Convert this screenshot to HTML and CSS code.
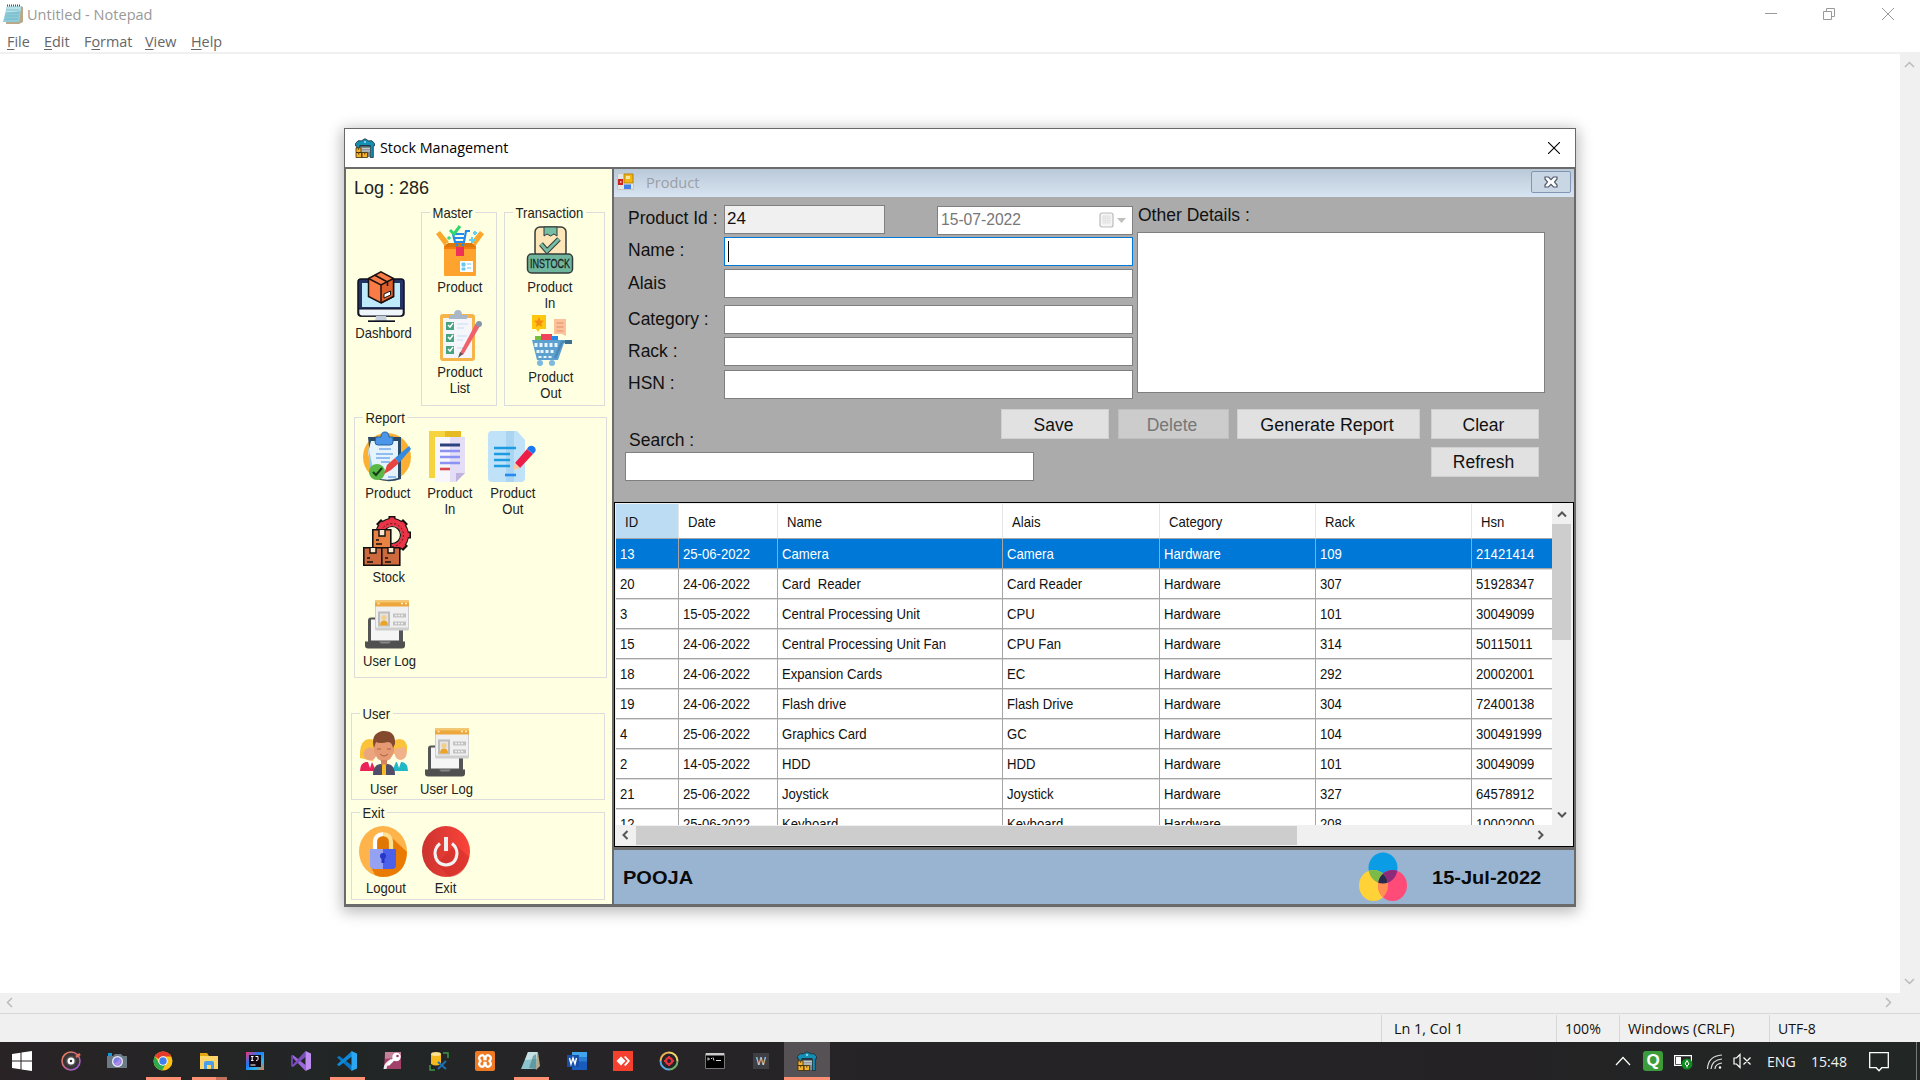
FILE: index.html
```html
<!DOCTYPE html>
<html lang="en">
<head>
<meta charset="utf-8">
<title>Stock Management</title>
<link rel="stylesheet" href="styles.css">
</head>
<body>
<svg class="defs" width="0" height="0">
  <symbol id="notepad" viewBox="0 0 20 20">
    <path d="M4 2h14l2 1v15l-4 2H3z" fill="#b9a98a"/><path d="M4 2h14l-1.500 16H0z" fill="#8fcbd8"/><path d="M4 2h14l-.5 5L3 9z" fill="#b8e2ea"/><path d="M3.500 6h13M3 9h13M2.500 12h13M2 15h13" stroke="#62aebf" stroke-width=".6"/><path d="M4 1.500h14" stroke="#555" stroke-width="2" stroke-dasharray="1 1"/>
  </symbol>
  <symbol id="depot" viewBox="0 0 20 20">
    <path d="M.5 5.500L3 2.800h3.500L10 .7l3.500 2.100H17l2.500 2.700v2.300H18.300V19.500h-3V8H4.700v4H1.700V7.800H.5z" fill="#1590b4" stroke="#1c2a33" stroke-width=".8"/><path d="M4.700 7h10.600v1.600H4.700z" fill="#1c3442"/><path d="M5.500 9h9.500v10H5.500z" fill="#7d878c"/><path d="M6 10.800h9M6 13h9" stroke="#d6dde0" stroke-width="1.100"/><circle cx="10" cy="4" r="1.100" fill="#9adcf0"/>
    <path d="M1 9.800h5v4.700H1zM1 14.500h5.800V19.500H1zM6.800 14.500H12.500V19.500H6.800z" fill="#f4b32c" stroke="#3a2b10" stroke-width=".8"/><path d="M3.500 10v1.800M3.700 14.700v1.800M9.700 14.700v1.800" stroke="#7a4a08" stroke-width="1.200"/>
  </symbol>
  <symbol id="userlog" viewBox="0 0 46 50">
    <path d="M4 43V21q0-3 3-3h30q2 0 2 3v22z" fill="#555"/><path d="M7 20h28v21H7z" fill="#f5f5f5"/><path d="M1 42h40v4q0 3-3 3H4q-3 0-3-3z" fill="#505050"/><path d="M15 42h12l-2 2h-8z" fill="#888"/>
    <rect x="11" y="1" width="34" height="30" rx="1.500" fill="#cfcfcf"/><rect x="12" y="6" width="32" height="22" fill="#f0f0f0"/><path d="M11 1h34v6H11z" fill="#eda73c"/><path d="M11 1h34v2H11z" fill="#f6c86c"/><path d="M13.500 4h2M37 4h2M41 4h2" stroke="#fff0c8" stroke-width="1.500"/>
    <path d="M14 12h12v15H14z" fill="#bdbdbd"/><path d="M16 14h8v12h-8z" fill="#e4e4e4"/><circle cx="20" cy="18" r="2.600" fill="#f3cf8a"/><path d="M16 26q0-5 4-5t4 5z" fill="#eba428"/>
    <path d="M29 14h13v4H29zM29 22h13v4H29z" fill="#c2c2c2"/><path d="M31 16h9M31 24h9" stroke="#eee" stroke-width="1.500" stroke-dasharray="2 1"/>
  </symbol>
</svg>

<header class="np-title">
  <svg width="20" height="20"><use href="#notepad"/></svg>
  <span class="np-name seg">Untitled - Notepad</span>
  <span class="np-controls">
    <svg width="14" height="14" viewBox="0 0 14 14"><path d="M2 6.500h12"/></svg>
    <svg width="14" height="14" viewBox="0 0 14 14"><path d="M1.500 4.500h8v8h-8zM4.500 4V1.500h8v8h-3"/></svg>
    <svg width="14" height="14" viewBox="0 0 14 14"><path d="M1 1l12 12M13 1L1 13"/></svg>
  </span>
</header>
<nav class="np-menu">
  <span class="seg m1"><u>F</u>ile</span><span class="seg m2"><u>E</u>dit</span><span class="seg m3">F<u>o</u>rmat</span><span class="seg m4"><u>V</u>iew</span><span class="seg m5"><u>H</u>elp</span>
</nav>
<main class="np-main">
  <div class="np-page"></div>
  <div class="np-vbar"><svg width="11" height="7" viewBox="0 0 11 7"><path d="M1 6l4.500-4.500L10 6"/></svg><svg width="11" height="7" viewBox="0 0 11 7"><path d="M1 1l4.500 4.500L10 1"/></svg></div>
</main>
<div class="np-hbar"><svg width="7" height="11" viewBox="0 0 7 11"><path d="M6 1L1.500 5.500L6 10"/></svg><svg width="7" height="11" viewBox="0 0 7 11"><path d="M1 1l4.500 4.500L1 10"/></svg></div>
<footer class="np-status"><div class="s1"><span class="seg">Ln 1, Col 1</span></div><div class="s2"><span class="seg">100%</span></div><div class="s3"><span class="seg">Windows (CRLF)</span></div><div class="s4"><span class="seg">UTF-8</span></div></footer>

<section class="taskbar">
  <div class="task start"><svg width="20" height="20" viewBox="0 0 20 20"><path d="M0 3l8.500-1.300v7.800H0zM9.500 1.500L20 0v9.500H9.500zM0 10.500h8.500v7.800L0 17zM9.500 10.500H20V20L9.500 18.500z" fill="#fff"/></svg></div>
  <div class="task"><svg width="20" height="20" viewBox="0 0 20 20"><defs><linearGradient id="rg" x1="0" y1="0" x2="1" y2="1"><stop offset="0" stop-color="#f08a4a"/><stop offset=".5" stop-color="#c8658e"/><stop offset="1" stop-color="#8a5be8"/></linearGradient></defs><circle cx="10" cy="10" r="9" fill="#3a3638" stroke="url(#rg)" stroke-width="1.600"/><circle cx="10" cy="10" r="5" fill="#555"/><circle cx="10" cy="10" r="3.500" fill="#fff"/><circle cx="10" cy="10" r="1.200" fill="#333"/><path d="M15 6l4-3" stroke="#e57455" stroke-width="2.500"/></svg></div>
  <div class="task"><svg width="20" height="20" viewBox="0 0 20 20"><path d="M0 5h6l2-2h6l2 2h4v12H0z" fill="#6c7a83"/><path d="M1 2h4v3H1z" fill="#1997d8"/><circle cx="10.500" cy="10.500" r="5.500" fill="#e9edf5"/><circle cx="10.500" cy="10.500" r="4.200" fill="#7c7fe0"/><path d="M7 12q4 0 6-5q2 5-1.500 7.300Q8 15 7 12z" fill="#b489ea"/></svg></div>
  <div class="task"><svg width="20" height="20" viewBox="0 0 20 20"><circle cx="10" cy="10" r="9.500" fill="#fbc116"/><path d="M10 .5A9.500 9.500 0 0 1 18.300 5.500H10a4.500 4.500 0 0 0-4 2.500L1.800 5.300A9.500 9.500 0 0 1 10 .5z" fill="#e33b2e"/><path d="M1.800 5.300A9.500 9.500 0 0 0 9 19.500l4-7a4.500 4.500 0 0 1-7-.5z" fill="#2da94f"/><circle cx="10" cy="10" r="4.700" fill="#fff"/><circle cx="10" cy="10" r="3.700" fill="#3f7fee"/></svg><i class="run"></i></div>
  <div class="task"><svg width="20" height="20" viewBox="0 0 20 20"><path d="M1 2h7l2 3H1z" fill="#e5a50f"/><path d="M1 5h18v13H1z" fill="#fcd668"/><path d="M5 18v-6q0-2 2-2h6q2 0 2 2v6h-3v-4H8v4z" fill="#4a9fe8"/></svg><i class="run multi"></i></div>
  <div class="task"><svg width="20" height="20" viewBox="0 0 20 20"><defs><linearGradient id="ij" x1="0" y1="0" x2="1" y2="1"><stop offset="0" stop-color="#f4327b"/><stop offset=".4" stop-color="#1c7cf0"/><stop offset=".7" stop-color="#25b5f5"/><stop offset="1" stop-color="#f7772f"/></linearGradient></defs><path d="M1 1h18v18H1z" fill="url(#ij)"/><path d="M4 4h12v12H4z" fill="#130812"/><path d="M6 5.500h2.500M6 9.500h2.500M7.200 5.500v4M10.500 5.500h2.500v3q0 1-2 1M5.500 14h5" stroke="#fff" fill="none"/></svg></div>
  <div class="task"><svg width="20" height="20" viewBox="0 0 20 20"><path d="M0 5l2-1 12.500 10V20L1.500 6.500z" fill="#9a68d8"/><path d="M0 5l2-1v12l-2-1z" fill="#6a43a8"/><path d="M14.500 0v6L2 16l-1.500-1z" fill="#7a4fba"/><path d="M14.500 0L20 2.500v15L14.500 20z" fill="#bf8df2"/></svg></div>
  <div class="task"><svg width="20" height="20" viewBox="0 0 20 20"><path d="M0 6.500l2-1.800 13 9.800V20z" fill="#0b74c4"/><path d="M0 13.500l2 1.800L15 5.500V0z" fill="#0f88d8"/><path d="M14.500 0L20 2.500v15L14.500 20z" fill="#2aa7f0"/></svg><i class="run"></i></div>
  <div class="task"><svg width="20" height="20" viewBox="0 0 20 20"><path d="M2 1h16v17H1z" fill="#a2416a"/><path d="M2 1h16v5L2 8z" fill="#c2809b"/><path d="M2 18q0-5 7-9" stroke="#eee" stroke-width="3" fill="none"/><circle cx="13.500" cy="6" r="4.200" fill="#fff"/><circle cx="14.500" cy="5" r="1.300" fill="#9c3c65"/><path d="M11 8l-6 6" stroke="#fff" stroke-width="2.500"/></svg></div>
  <div class="task"><svg width="20" height="20" viewBox="0 0 20 20"><path d="M2 3v10q5 3 10 0V3z" fill="#f5b91c"/><ellipse cx="7" cy="3" rx="5" ry="2" fill="#fde18b"/><path d="M14 2h5v5M1 14v5h5" stroke="#3c9746" stroke-width="1.500" fill="none"/><path d="M9 11l8 7M17 10l-8 8" stroke="#1d6fae" stroke-width="2"/></svg></div>
  <div class="task"><svg width="20" height="20" viewBox="0 0 20 20"><rect width="20" height="20" rx="2" fill="#ee7b24"/><path d="M6 4.500q3-1 3.500 2.500v1h1V7q.5-3.500 3.500-2.500 3.500 2 .5 5.500 3 3.500-.5 5.500-3 1-3.500-2.500v-1h-1v1q-.5 3.500-3.500 2.500-3.500-2-.5-5.500-3-3.500.5-5.500z" fill="none" stroke="#fff" stroke-width="2.300"/></svg></div>
  <div class="task"><svg width="20" height="20" viewBox="0 0 20 20"><path d="M8 1h9l2 14-4 4z" fill="#b5a684"/><path d="M7 1h9l-1 17H0z" fill="#8cc3cc"/><path d="M7 1h9l-.5 7L4 9z" fill="#c5e1e4"/><path d="M12 5l3-2v15l-7-1z" fill="#3f7e8c" opacity=".6"/></svg><i class="run"></i></div>
  <div class="task"><svg width="20" height="20" viewBox="0 0 20 20"><path d="M5 1h15v18H5z" fill="#1a5cbe"/><path d="M5 1h15v5H5z" fill="#41a5ee"/><path d="M5 6h15v4.500H5z" fill="#2b7cd3"/><path d="M0 4h12v12H0z" fill="#174fa8"/><path d="M2.500 7l1.500 6 2-6 2 6 1.500-6" stroke="#fff" stroke-width="1.400" fill="none"/></svg></div>
  <div class="task"><svg width="20" height="20" viewBox="0 0 20 20"><path d="M0 0h20v20H0z" fill="#f4402f"/><path d="M8 5.500l4.500 4.500L8 14.500 3.500 10z" fill="#fff"/><path d="M11 6l1.500-1L17 10l-4.500 5-1.500-1 3.500-4z" fill="#fff"/></svg></div>
  <div class="task"><svg width="20" height="20" viewBox="0 0 20 20" fill="none" stroke-width="2"><path d="M1.500 10A8.500 8.500 0 0 1 10 1.500" stroke="#eab055"/><path d="M10 1.500A8.500 8.500 0 0 1 18.500 10" stroke="#f3d566"/><path d="M18.500 10A8.500 8.500 0 0 1 10 18.500" stroke="#6eb667"/><path d="M10 18.500A8.500 8.500 0 0 1 1.500 10" stroke="#5ba8e5"/><circle cx="10" cy="10" r="3" stroke="#e9303f" stroke-width="2.200"/><path d="M10 5v1.500M10 13.500V15M5 10h1.500M13.500 10H15" stroke="#e9303f"/></svg></div>
  <div class="task"><svg width="20" height="20" viewBox="0 0 20 20"><path d="M.5 2.500h19v15H.5z" fill="#000" stroke="#777"/><path d="M1 2h18v2.500H1z" fill="#ccc"/><path d="M3 8h2M3 6.500v3M6.500 7v1M8 6.500l1 3M11 9.500h5" stroke="#ddd"/></svg></div>
  <div class="task"><span class="wtile">W</span></div>
  <div class="task active"><svg width="20" height="20"><use href="#depot"/></svg><i class="run full"></i></div>
  <div class="tray">
    <svg class="t1" width="16" height="10" viewBox="0 0 16 10"><path d="M1 9l7-7.500L15 9" fill="none" stroke="#fff" stroke-width="1.200"/></svg>
    <span class="t2">Q</span>
    <svg class="t3" width="20" height="17" viewBox="0 0 20 17"><path d="M.6 2.600h16.800v9.800H.6z" fill="none" stroke="#fff" stroke-width="1.200"/><path d="M2 4h5v7H2z" fill="#fff"/><circle cx="13" cy="11" r="5.500" fill="#108a20"/><path d="M13 7.500l2 3.500-2 2-2-2zM13 13v1.500" fill="none" stroke="#fff"/></svg>
    <svg class="t4" width="17" height="17" viewBox="0 0 17 17" fill="none" stroke="#ddd" stroke-width="1.200"><path d="M1.500 16Q2 3 16 2M5 16Q6 7 16 6M9 16Q9 11 16 10"/><circle cx="14" cy="14.500" r="1.200" fill="#fff" stroke="none"/></svg>
    <svg class="t5" width="19" height="16" viewBox="0 0 19 16" fill="none" stroke="#fff" stroke-width="1.200"><path d="M1 5h2.500L7 1.500v13L3.500 11H1zM10.500 4.500l7 7M17.500 4.500l-7 7"/></svg>
    <span class="seg t6">ENG</span><span class="seg t7">15:48</span>
    <svg class="t8" width="20" height="20" viewBox="0 0 20 20"><path d="M.7.700h18.600v15h-6.500L10 18.800 7.200 15.700H.7z" fill="none" stroke="#fff" stroke-width="1.300"/></svg>
    <i class="peek"></i>
  </div>
</section>

<div class="win">
  <div class="win-title"><svg width="20" height="20"><use href="#depot"/></svg><span class="seg">Stock Management</span><svg class="x" width="12" height="12" viewBox="0 0 12 12"><path d="M0 0l12 12M12 0L0 12"/></svg></div>
  <div class="win-body">
    <aside class="side">
      <div class="log">Log : 286</div>
      <div class="side-top">
        <div class="tool dash"><svg width="48" height="51" viewBox="0 0 48 51">
          <rect x="1" y="8" width="46" height="37" rx="3" fill="#233366" stroke="#0c1020" stroke-width="1.500"/><path d="M5 12h38v24H5z" fill="#bfeafa"/><path d="M1.700 38h44.600v4q0 3-3 3H4.700q-3 0-3-3z" fill="#eef5fb" stroke="#0c1020" stroke-width="1.200"/><path d="M19 45h10l1 5H18z" fill="#c3cfdb"/><path d="M11 50.200h27" stroke="#0c1020" stroke-width="1.700"/>
          <path d="M24 .8L36.500 7.500v18L24 32 11.500 25.500v-18z" fill="#f97b46" stroke="#1a1110" stroke-width="1.500"/><path d="M24 14L36.500 7.500v18L24 32z" fill="#dd5f2b"/><path d="M11.500 7.500L24 14l12.500-6.500M24 14v18M17.500 4l13 7v4M36.500 7.500v18L24 32" fill="none" stroke="#1a1110" stroke-width="1.500"/><path d="M27 23l6.500-3v4L27 27z" fill="#fff" stroke="#1a1110"/></svg><span class="nar">Dashbord</span></div>
        <div class="group master"><div class="legend nar">Master</div>
          <div class="tool"><svg width="48" height="51" viewBox="0 0 48 51"><path d="M8 20L0 9l4-3 9 11zM40 20l8-11-4-3-9 11z" fill="#fba72c"/><path d="M8 19h32v31q0 1-1 1H9q-1 0-1-1z" fill="#ffa32f"/><path d="M8 22l4-4h24l4 4z" fill="#dd7706"/><path d="M8 22h32v2H8z" fill="#f57c0d"/><path d="M20 22h8v9h-8z" fill="#ee3158"/><path d="M24 36h13v11H24z" fill="#fff"/><path d="M26 38h3v3h-3zM26 43h3v2h-3zM31 39h4M31 43h4" fill="#69c7f5" stroke="#69c7f5"/><path d="M34 6h-4l-2 11h-9l-2-8H28M18 13h11" stroke="#218bf0" stroke-width="2.200" fill="none"/><circle cx="21" cy="20" r="1.400" fill="#218bf0"/><circle cx="27" cy="20" r="1.400" fill="#218bf0"/><path d="M14 5l4 4 6-8" stroke="#32d66b" stroke-width="3" fill="none"/><path d="M36 12v6M33 15h6M39 6v4M37 8h4" stroke="#5dd2f5" stroke-width="2"/><circle cx="13" cy="13" r="1.800" fill="#3bd978"/></svg><span class="nar">Product</span></div>
          <div class="tool"><svg width="48" height="51" viewBox="0 0 48 51"><rect x="4" y="4" width="35" height="47" rx="3" fill="#f5b54a"/><path d="M7 8h29v40H7z" fill="#f5f6fb"/><path d="M13 5h5q0-5 4-5t4 5h5v4H13z" fill="#a8b8c8"/><path d="M10 12h8v8h-8zM10 24h8v8h-8zM10 36h8v8h-8z" fill="#47a37f"/><path d="M12 15l2 2 3-4M12 27l2 2 3-4M12 39l2 2 3-4" stroke="#fff" stroke-width="1.500" fill="none"/><path d="M21 14h11M21 18h7M21 26h10M21 30h6M21 38h7" stroke="#d8e3f3" stroke-width="1.500"/><path d="M24 43l16-30 4 3-17 29z" fill="#ef626c"/><path d="M24 42l-2 6 5-4z" fill="#555"/><circle cx="43" cy="14" r="3" fill="#8696a8"/></svg><span class="nar">Product<br>List</span></div>
        </div>
        <div class="group trans"><div class="legend nar">Transaction</div>
          <div class="tool"><svg width="48" height="51" viewBox="0 0 48 51"><rect x="9" y="2" width="31" height="30" rx="5" fill="#fde6b8" stroke="#333c3a" stroke-width="1.500"/><path d="M18 2h13v9l-3-2-3.500 2L21 9l-3 2z" fill="#77bda3" stroke="#333c3a"/><path d="M15 19l6 7 12-12" stroke="#333c3a" stroke-width="5" fill="none"/><path d="M15 19l6 7 12-12" stroke="#77bda3" stroke-width="3" fill="none"/><rect x="1.500" y="29" width="45" height="19" rx="4" fill="#70b69c" stroke="#333c3a" stroke-width="1.500"/><text x="24" y="43" text-anchor="middle" textLength="40" lengthAdjust="spacingAndGlyphs" font-family="Liberation Sans" font-size="13.500" fill="#18221f" stroke="#18221f" stroke-width=".3">INSTOCK</text></svg><span class="nar">Product<br>In</span></div>
          <div class="tool"><svg width="48" height="51" viewBox="0 0 48 51"><path d="M5 0h14v14h-6l-2 3-2-3H5z" fill="#fdc70e"/><path d="M12 2l1.500 3.500 3.500.3-2.700 2.500.8 3.700-3.100-2-3.100 2 .8-3.700L7 5.800l3.500-.3z" fill="#f78a14"/><path d="M27 4h12v17l-4-2H27z" fill="#fbc19a"/><path d="M29.500 8h7M29.500 12h7M29.500 16h7" stroke="#e48f62"/><path d="M8 21h7v5H8z" fill="#76be3c"/><path d="M14 19h11v7H14z" fill="#f04458"/><path d="M25 21h6v5h-6z" fill="#2688ea"/><path d="M5 25h33l-7 20H10z" fill="#5d9fce"/><path d="M9 28v4M14 28v4M19 28v4M24 28v4M29 28v4M11 35v3M15 35v3M20 35v3M25 35v3M13 41v2M18 41v2M23 41v2" stroke="#e8f5fd" stroke-width="3"/><path d="M28 43l7-16h8" stroke="#4b8bb8" stroke-width="2.500" fill="none"/><path d="M38 25h7v4h-7z" fill="#3b708f"/><circle cx="13" cy="48" r="3" fill="#7cb8e0"/><circle cx="25" cy="48" r="3" fill="#7cb8e0"/></svg><span class="nar">Product<br>Out</span></div>
        </div>
      </div>
      <div class="group report"><div class="legend nar">Report</div>
        <div class="tools">
          <div class="tool"><svg width="48" height="51" viewBox="0 0 48 51"><circle cx="24" cy="26" r="24" fill="#fbb033"/><path d="M5 6h33v42q-14 5-26-1L9 44z" fill="#2c4a66"/><path d="M8 10h27v37q-12 4-24-1L5 22z" fill="#e5f3fd"/><path d="M5 14l6 28-4-6z" fill="#8cc8f2"/><path d="M13 6h5q0-5 4-5t4 5h4v5q0 3-3 3H15q-3 0-3-3z" fill="#4b96e8" stroke="#24619f"/><path d="M16 18h12M13 23h17M13 27h14M18 31h9M25 46h8" stroke="#75abe8" stroke-width="1.500"/><circle cx="14" cy="41" r="8" fill="#5ab847"/><path d="M10 41l3 3 6-7" stroke="#153c14" stroke-width="2" fill="none"/><path d="M21 43l3-9 8-7 4 5-8 7z" fill="#e94540"/><path d="M32 27L46 15l2 3-12 14z" fill="#338adf"/></svg><span class="nar near">Product</span></div>
          <div class="tool"><svg width="48" height="51" viewBox="0 0 48 51"><path d="M4 0h32v47H4z" fill="#f6d440"/><path d="M20 0h16v6H20z" fill="#e6ba22"/><path d="M10 6h30v36l-9 9H10z" fill="#f8f6fd"/><path d="M25 6h15v36l-9 9h-6z" fill="#e3ddf6"/><path d="M40 42l-9 9v-9z" fill="#c0b3df"/><path d="M15 14h20" stroke="#2b427f" stroke-width="3"/><path d="M15 20h20M15 26h20M15 32h20" stroke="#8c91f4" stroke-width="2.600"/><path d="M15 38h10" stroke="#d94848" stroke-width="2.600"/></svg><span class="nar near">Product<br>In</span></div>
          <div class="tool"><svg width="48" height="51" viewBox="0 0 48 51"><path d="M4 0h25l8 9v38q0 4-4 4H4q-4 0-4-4V4q0-4 4-4z" fill="#c0e2f8"/><path d="M18 0h8v51h-8z" fill="#a9d5f3"/><path d="M6 17h22M6 23h16M6 29h16M6 35h16" stroke="#1c9ce0" stroke-width="2.600"/><path d="M17 44h11" stroke="#258bf2" stroke-width="2.600"/><path d="M27 32L39 18l6 5-13 14z" fill="#ee1d48"/><path d="M27 32l5 5-7 2z" fill="#fac89f"/><path d="M39 18q2-4 6-3 4 2 2 6l-2 2z" fill="#1b78f0"/></svg><span class="nar near">Product<br>Out</span></div>
          <div class="tool"><svg width="48" height="51" viewBox="0 0 48 51"><circle cx="29" cy="20" r="13" fill="none" stroke="#111" stroke-width="8"/><path d="M29 1v38M10 20h38M15.500 6.500l27 27M42.500 6.500l-27 27" stroke="#111" stroke-width="7"/><path d="M29 2.500v35M11.500 20h35M17 8l24 24M41 8L17 32" stroke="#ea3447" stroke-width="4.500"/><circle cx="29" cy="20" r="12.500" fill="#ffffe1" stroke="#ea3447" stroke-width="7"/><circle cx="29" cy="20" r="8.500" fill="none" stroke="#111" stroke-width="1.200"/><circle cx="29" cy="20" r="11.500" fill="none" stroke="#61151f" stroke-dasharray="2 2"/><path d="M9.800 14.800h18v18h-18z" fill="#e78243" stroke="#111" stroke-width="1.600"/><path d="M.8 32.800h18v17.500H.8zM18.800 32.800h18v17.500h-18z" fill="#cc6a3e" stroke="#111" stroke-width="1.600"/><path d="M16 15v6h6v-6M7 33v5h6v-5M25 33v5h6v-5" fill="#fbe6cf" stroke="#111" stroke-width="1.400"/><path d="M13 25h3M13 29h6M4 43h3M4 47h6M22 43h3M22 47h6" stroke="#111" stroke-width="1.400"/></svg><span class="nar shift">Stock</span></div>
          <div class="tool newrow"><svg width="46" height="50"><use href="#userlog"/></svg><span class="nar shift">User Log</span></div>
        </div>
      </div>
      <div class="group user"><div class="legend nar">User</div>
        <div class="tools">
          <div class="tool"><svg width="48" height="51" viewBox="0 0 48 51"><path d="M0 31q-1-18 9-19 8 0 8 8l-4 14z" fill="#fbc339"/><path d="M31 20q1-8 9-8 8 1 7 11l-2 4H32z" fill="#fbc339"/><circle cx="10" cy="27" r="6.500" fill="#eba680"/><path d="M34 22l11-2 2 5q-1 8-7 8-6-1-6-11z" fill="#f1b189"/><path d="M0 44q0-8 6-9h6l4 9z" fill="#ea2458"/><path d="M32 44l4-9h6q6 1 6 9z" fill="#20b8c5"/><path d="M8 35l2 6 2-6M37 35l2 6 2-6" fill="#fff"/><path d="M14 20q0-8 10-9 10 1 10 9v4q-2 10-10 10t-10-10z" fill="#e69a74"/><path d="M14 21q-4-14 8-17 14-1 13 13l-2 4q-1-6-5-6-8 2-12 0z" fill="#844a2e"/><path d="M13 48q0-10 7-11h8q7 1 7 11z" fill="#514c67"/><path d="M21 33h6v4l-3 4-3-4z" fill="#d5835f"/><path d="M22 38l2-1 2 1v10h-4z" fill="#f3bb26"/><path d="M20 27q4 4 8 0M17 22h4M27 22h4" stroke="#a95e3d" fill="none"/></svg><span class="nar">User</span></div>
          <div class="tool"><svg width="46" height="50"><use href="#userlog"/></svg><span class="nar">User Log</span></div>
        </div>
      </div>
      <div class="group exit"><div class="legend nar">Exit</div>
        <div class="tools">
          <div class="tool"><svg width="48" height="51" viewBox="0 0 48 51"><ellipse cx="24" cy="25.500" rx="24" ry="25.500" fill="#feb34b"/><path d="M31 10l17 16q-1 24-24 25-4 0-8-2l-4-8z" fill="#e97b05"/><path d="M17 24v-7q0-8 7-8t7 8v7z" fill="#e07705"/><path d="M16 25v-9q0-7 8-8" stroke="#fff" stroke-width="4.200" fill="none"/><path d="M24 8q8 1 8 8v9" stroke="#ffe090" stroke-width="4.200" fill="none"/><path d="M11 23h13v20H15q-4 0-4-4z" fill="#95a1f3"/><path d="M24 23h13v16q0 4-4 4h-9z" fill="#4c60ea"/><circle cx="24" cy="30" r="3" fill="#2636c7"/><path d="M24 31v6" stroke="#2636c7" stroke-width="3"/></svg><span class="nar shift">Logout</span></div>
          <div class="tool"><svg width="48" height="51" viewBox="0 0 48 51"><defs><linearGradient id="pw" x1="0" x2="1"><stop offset="0" stop-color="#cc3330"/><stop offset="1" stop-color="#fb4439"/></linearGradient></defs><ellipse cx="24" cy="25.500" rx="24" ry="25.500" fill="url(#pw)"/><path d="M33 18l14 13q-4 19-20 20L15 38z" fill="#c92b28" opacity=".5"/><path d="M18 17.500q-5 4-5 10 1 11 11 11.500 10-.5 11-11.500 0-6-5-10" fill="none" stroke="#f3f3f3" stroke-width="3"/><path d="M24 11v14" stroke="#eee" stroke-width="4"/></svg><span class="nar">Exit</span></div>
        </div>
      </div>
    </aside>

    <div class="mdi">
      <div class="child-title"><svg width="17" height="17" viewBox="0 0 17 17"><path d="M.5.500h16v16H.5z" fill="#e4e4e4" stroke="#c8c4c0"/><path d="M7 1h9v9H7z" fill="#f3b515" stroke="#a97808" stroke-width=".8"/><path d="M9 3h4v3H9z" fill="#fde79b"/><path d="M1 6h5v6H1z" fill="#c8251b"/><path d="M3 8h1.500v2H3z" fill="#f5a79d"/><path d="M7 11.500h7V16H7z" fill="#3e7fe8"/></svg><span class="seg">Product</span>
        <span class="child-x"><svg width="14" height="12" viewBox="0 0 14 12"><path d="M1 1h3.500L7 3.700 9.500 1H13v2L10.500 6 13 9v2H9.500L7 8.300 4.500 11H1V9l2.500-3L1 3z" fill="#fff" stroke="#53596a" stroke-width="1.200"/></svg></span></div>
      <div class="form">
        <div class="form-top">
          <div class="fields">
            <label class="first">Product Id :</label><div class="pair"><div class="box id">24</div><div class="box date"><span>15-07-2022</span><svg width="28" height="17" viewBox="0 0 28 17"><rect x="1" y="1" width="13" height="14" rx="2" fill="#f4f4f4" stroke="#bdb9bd" stroke-width="1.200"/><path d="M4 4h7v7H4zM4 6.300h7M4 8.700h7M6.300 4v7M8.700 4v7" stroke="#ddd" fill="none" stroke-width=".8"/><path d="M18 6h9l-4.500 5z" fill="#c0bfbc"/></svg></div></div>
            <label class="name">Name :</label><div class="box focus"><i class="caret"></i></div>
            <label>Alais</label><div class="box"></div>
            <label>Category :</label><div class="box"></div>
            <label>Rack :</label><div class="box"></div>
            <label class="name">HSN :</label><div class="box"></div>
          </div>
          <div class="details"><label>Other Details :</label><div class="box area"></div></div>
        </div>
        <div class="actions"><label>Search :</label><div class="btn save">Save</div><div class="btn del">Delete</div><div class="btn gen">Generate Report</div><div class="btn clear">Clear</div></div>
        <div class="actions two"><div class="box search"></div><div class="btn refresh">Refresh</div></div>
      </div>
      <div class="table">
        <div class="view">
          <div class="grid">
            <div class="row head"><p class="sel"><span>ID</span></p><p><span>Date</span></p><p><span>Name</span></p><p><span>Alais</span></p><p><span>Category</span></p><p><span>Rack</span></p><p><span>Hsn</span></p></div>
            <div class="row on"><p><span>13</span></p><p><span>25-06-2022</span></p><p><span>Camera</span></p><p><span>Camera</span></p><p><span>Hardware</span></p><p><span>109</span></p><p><span>21421414</span></p></div>
            <div class="row"><p><span>20</span></p><p><span>24-06-2022</span></p><p><span>Card&nbsp; Reader</span></p><p><span>Card Reader</span></p><p><span>Hardware</span></p><p><span>307</span></p><p><span>51928347</span></p></div>
            <div class="row"><p><span>3</span></p><p><span>15-05-2022</span></p><p><span>Central Processing Unit</span></p><p><span>CPU</span></p><p><span>Hardware</span></p><p><span>101</span></p><p><span>30049099</span></p></div>
            <div class="row"><p><span>15</span></p><p><span>24-06-2022</span></p><p><span>Central Processing Unit Fan</span></p><p><span>CPU Fan</span></p><p><span>Hardware</span></p><p><span>314</span></p><p><span>50115011</span></p></div>
            <div class="row"><p><span>18</span></p><p><span>24-06-2022</span></p><p><span>Expansion Cards</span></p><p><span>EC</span></p><p><span>Hardware</span></p><p><span>292</span></p><p><span>20002001</span></p></div>
            <div class="row"><p><span>19</span></p><p><span>24-06-2022</span></p><p><span>Flash drive</span></p><p><span>Flash Drive</span></p><p><span>Hardware</span></p><p><span>304</span></p><p><span>72400138</span></p></div>
            <div class="row"><p><span>4</span></p><p><span>25-06-2022</span></p><p><span>Graphics Card</span></p><p><span>GC</span></p><p><span>Hardware</span></p><p><span>104</span></p><p><span>300491999</span></p></div>
            <div class="row"><p><span>2</span></p><p><span>14-05-2022</span></p><p><span>HDD</span></p><p><span>HDD</span></p><p><span>Hardware</span></p><p><span>101</span></p><p><span>30049099</span></p></div>
            <div class="row"><p><span>21</span></p><p><span>25-06-2022</span></p><p><span>Joystick</span></p><p><span>Joystick</span></p><p><span>Hardware</span></p><p><span>327</span></p><p><span>64578912</span></p></div>
            <div class="row"><p><span>12</span></p><p><span>25-06-2022</span></p><p><span>Keyboard</span></p><p><span>Keyboard</span></p><p><span>Hardware</span></p><p><span>208</span></p><p><span>10002000</span></p></div>
          </div>
          <div class="vbar"><svg width="10" height="8" viewBox="0 0 10 8"><path d="M1 6.500L5 2.500l4 4"/></svg><i></i><svg class="dn" width="10" height="8" viewBox="0 0 10 8"><path d="M1 1.500l4 4 4-4"/></svg></div>
        </div>
        <div class="hbar"><svg width="8" height="10" viewBox="0 0 8 10"><path d="M6.500 1l-4 4 4 4"/></svg><i></i><svg class="rt" width="8" height="10" viewBox="0 0 8 10"><path d="M1.500 1l4 4-4 4"/></svg></div>
      </div>
      <div class="foot"><b class="who">POOJA</b>
        <svg width="48" height="50" viewBox="0 0 48 50"><defs><clipPath id="cy"><ellipse cx="24" cy="16" rx="14.500" ry="15.500"/></clipPath><clipPath id="ye"><ellipse cx="14.500" cy="33.500" rx="14.500" ry="15.500"/></clipPath></defs><ellipse cx="24" cy="16" rx="14.500" ry="15.500" fill="#0a9ce4"/><ellipse cx="14.500" cy="33.500" rx="14.500" ry="15.500" fill="#ffd337"/><ellipse cx="33.500" cy="33.500" rx="14.500" ry="15.500" fill="#ff4b77"/><g clip-path="url(#cy)"><ellipse cx="14.500" cy="33.500" rx="14.500" ry="15.500" fill="#7dbb48"/><ellipse cx="33.500" cy="33.500" rx="14.500" ry="15.500" fill="#8d2a7c"/></g><g clip-path="url(#ye)"><ellipse cx="33.500" cy="33.500" rx="14.500" ry="15.500" fill="#ff8f52"/><g clip-path="url(#cy)"><ellipse cx="33.500" cy="33.500" rx="14.500" ry="15.500" fill="#28294e"/></g></g></svg>
        <b class="day">15-Jul-2022</b></div>
    </div>
  </div>
</div>
</body>
</html>
```
FILE: styles.css
```css
* { box-sizing: border-box; }
body { margin: 0; width: 1920px; height: 1080px; overflow: hidden; background: #fff; display: flex; flex-direction: column; font-family: "Liberation Sans", Arial, sans-serif; position: relative; }
svg { display: block; flex: none; }
.defs { position: absolute; }
.seg { font-family: "Open Sans", "Noto Sans", sans-serif; font-size: 15px; line-height: 20px; white-space: nowrap; display: inline-block; transform: scaleX(.94); transform-origin: 0 50%; }

/* Notepad */
.np-title { height: 28px; display: flex; padding: 4px 0 0 3px; color: #999; }
.np-name { margin: 0 0 0 4px; transform: scaleX(.97); }
.np-controls { margin-left: auto; display: flex; gap: 45px; padding: 3px 25px 0 0; }
.np-controls svg { fill: none; stroke: #999; }
.np-menu { height: 26px; border-bottom: 2px solid #f0f0f0; display: flex; padding-left: 7px; color: #666; }
.np-menu span { margin-top: 3px; transform: scaleX(.96); }
.np-menu u { text-underline-offset: 2px; text-decoration-thickness: 1px; }
.m1 { width: 37px; } .m2 { width: 40px; } .m3 { width: 61px; } .m4 { width: 46px; }
.np-main { height: 939px; display: flex; }
.np-page { flex: 1; }
.np-vbar { width: 20px; background: #f0f0f0; display: flex; flex-direction: column; justify-content: space-between; align-items: center; padding: 7px 2px 8px 0; }
.np-vbar svg, .np-hbar svg { fill: none; stroke: #bbb; stroke-width: 1.500; }
.np-hbar { height: 20px; background: #f0f0f0; display: flex; justify-content: space-between; align-items: center; padding: 0 28px 2px 6px; }
.np-status { height: 29px; background: #f0f0f0; border-top: 1px solid #d7d7d7; display: flex; justify-content: flex-end; color: #111; }
.np-status div { border-left: 1px solid #d7d7d7; margin-top: 1px; padding: 3px 0 0 12px; }
.s1 { width: 175px; } .s2 { width: 63px; } .s3 { width: 150px; } .s4 { width: 151px; }
.np-status .s2, .np-status .s3, .np-status .s4 { padding-left: 8px; }
.s1 .seg, .s3 .seg { transform: scaleX(.96); }

/* Taskbar */
.taskbar { height: 38px; display: flex; background: linear-gradient(90deg, #292326 0, #212625 350px, #272427 600px, #242224 1500px, #222625 1800px); }
.task { width: 46px; display: flex; align-items: center; justify-content: center; position: relative; flex: none; }
.start { width: 48px; padding-right: 4px; }
.run { position: absolute; left: 6px; bottom: 0; width: 35px; height: 3px; background: #fd8f72; }
.multi { background: linear-gradient(90deg, #fd8f72 24px, #c26f5c 24px); }
.active { background: #555154; }
.full { left: 0; width: 46px; }
.wtile { width: 16px; height: 16px; background: #3d3f42; color: #ddd; font-size: 10.500px; line-height: 17px; text-align: center; }
.tray { margin-left: auto; width: 305px; display: flex; align-items: center; color: #f2f2f2; }
.t2 { width: 20px; height: 20px; background: #3c9c3c; border-radius: 3px; color: #fff; font: 700 17px/20px "Liberation Sans", sans-serif; text-align: center; margin: 0 11px 0 12px; }
.t4 { margin-left: 12px; } .t5 { margin: 0 15px 0 10px; }
.tray .seg { line-height: 38px; height: 38px; }
.t6 { width: 44px; } .t7 { width: 58px; }
.t8 { margin-top: 1px; }
.peek { width: 1px; height: 38px; background: #777; margin-left: 27px; }

/* Application window */
.win { position: absolute; left: 344px; top: 128px; width: 1232px; height: 779px; border: 1px solid #696969; background: #6b6b6b; box-shadow: 0 3px 14px 2px rgba(0,0,0,.28); display: flex; flex-direction: column; }
.win-title { height: 38px; background: #fff; display: flex; align-items: center; padding: 0 15px 0 10px; color: #000; flex: none; }
.win-title .seg { margin: -2px 0 0 5px; transform: scaleX(.955); }
.win-title .x { margin-left: auto; stroke: #000; stroke-width: 1.100; }
.win-body { flex: 1; display: flex; padding: 2px 1px 2px 1px; }

/* Sidebar */
.side { width: 266px; background: #ffffe1; color: #222; flex: none; }
.nar { font-size: 15px; white-space: nowrap; transform: scaleX(.87); }
.shift { margin-left: 5px; }
.near { margin-left: 2px; }
.log { height: 43px; padding: 8px 0 0 8px; font-size: 18px; line-height: 22px; }
.side-top { display: flex; height: 194px; }
.dash { width: 75px; padding: 59px 5px 0 0; }
.dash .nar { margin-left: 5px; }
.group { border: 1px solid #dcdcdc; }
.legend { margin: -9px 0 0 8px; padding: 0 3px; line-height: 18px; width: fit-content; background: #ffffe1; transform-origin: 0 50%; }
.tool { display: flex; flex-direction: column; align-items: center; }
.tool .nar { line-height: 16px; margin-top: 3px; text-align: center; }
.tool svg { height: 51px; }
.master { width: 76px; } .master .tool { height: 85px; padding: 3px 0 0 2px; }
.trans { width: 101px; margin-left: 7px; } .trans .tool { height: 89px; padding: 3px 9px 0 0; }
.trans .tool + .tool { padding: 4px 7px 0 0; }
.report { width: 253px; height: 261px; margin: 11px 0 0 8px; }
.tools { display: grid; grid-template-columns: 62.500px 62.500px 62.500px; grid-auto-rows: 84px; padding: 4px 0 0 0; }
.report .tools { padding-left: .5px; }
.newrow { grid-column: 1; }
.user { width: 254px; height: 87px; margin: 35px 0 0 5px; }
.user .tools { padding: 4px 0 0 1px; }
.exit { width: 254px; height: 88px; margin: 12px 0 0 5px; }

/* Child window */
.mdi { width: 960px; margin-left: 2px; display: flex; flex-direction: column; }
.child-title { height: 28px; background: linear-gradient(#bac9d8, #d7e4f2); display: flex; padding: 4px 3px 0 3px; color: #9a9ea5; }
.child-title .seg { margin: -1px 0 0 12px; transform: scaleX(.97); }
.child-x { margin: -2px 0 0 auto; width: 40px; height: 22px; border: 1px solid #8296b4; border-radius: 2px; background: #c9d6e4; display: flex; align-items: center; justify-content: center; }
.form { height: 305px; background: #ababab; font-size: 17.500px; color: #111; padding-top: 8px; }
.form label { line-height: 20px; white-space: nowrap; }
.form-top { display: flex; height: 204px; }
.fields { display: grid; grid-template-columns: 110px 409px; grid-template-rows: 32px 32px 36px 32px 33px 29px; align-items: start; }
.fields label { padding: 4px 0 0 14px; }
.fields .first { padding-top: 3px; }
.fields .name { padding-top: 3px; }
.box { background: #fff; border: 1px solid #7f7f7f; height: 29px; }
.pair { display: flex; }
.id { width: 161px; background: #f0f0f0; padding: 3px 0 0 2px; line-height: 20px; font-size: 17px; }
.date { width: 196px; margin: 1px -1px 0 52px; color: #777; padding: 3px 5px 0 3px; line-height: 20px; display: flex; justify-content: space-between; font-size: 17px; }
.date span { transform: scaleX(.92); transform-origin: 0 50%; }
.date svg { margin-top: 2px; }
.focus { border-color: #0078d7; padding: 3px; }
.caret { display: block; width: 1px; height: 21px; background: #000; }
.details { margin-left: 4px; }
.details label { display: block; height: 27px; padding-left: 1px; }
.area { width: 408px; height: 161px; }
.actions { display: flex; height: 38px; padding-left: 14px; }
.actions label { width: 373px; padding: 21px 0 0 1px; }
.btn { height: 30px; background: #e1e1e1; border: 1px solid #d0d0d0; line-height: 31px; text-align: center; color: #111; padding-right: 3px; }
.save { width: 108px; } .del { width: 111px; margin: 0 8px 0 9px; background: #ccc; border-color: #bfbfbf; color: #777; } .gen { width: 183px; font-size: 17.900px; } .clear { width: 108px; margin-left: 11px; }
.two { padding-left: 11px; }
.search { width: 409px; margin: 5px 397px 0 0; }
.refresh { width: 108px; line-height: 29px; }

/* Data grid */
.table { height: 345px; border: 1px solid #000; background: #f0f0f0; padding: 1px 0 0 1px; }
.view { height: 321px; display: flex; }
.grid { width: 936px; overflow: hidden; background: #fff; flex: none; }
.row { display: grid; grid-template-columns: 63px 99px 225px 157px 156px 156px 80px; grid-template-rows: 30px; height: 30px; font-size: 15px; color: #111; }
.row p { margin: 0; height: 30px; border-right: 1px solid #a5a5a5; border-bottom: 1px solid #a5a5a5; padding-left: 4px; line-height: 29px; white-space: nowrap; box-shadow: inset 0 1px #ddd; }
.row p:last-child { border-right: 0; }
.row span { display: inline-block; transform: scaleX(.875); transform-origin: 0 50%; }
.head { height: 35px; grid-template-rows: 35px; }
.head p { height: 35px; padding-left: 9px; line-height: 35px; border-right-color: #e5e5e5; box-shadow: none; }
.head .sel { background: #bcdcf4; }
.on p { background: #0078d7; color: #fff; box-shadow: none; }
.vbar { width: 19px; display: flex; flex-direction: column; align-items: center; }
.vbar svg, .hbar svg { fill: none; stroke: #555; stroke-width: 2; }
.vbar svg { margin-top: 6px; }
.vbar i { width: 19px; height: 116px; background: #cdcdcd; margin-top: 6px; }
.vbar .dn { margin-top: auto; margin-bottom: 6px; }
.hbar { display: flex; height: 20px; align-items: center; padding-left: 5px; }
.hbar i { width: 661px; height: 19px; background: #cdcdcd; margin-left: 7px; }
.hbar .rt { margin-left: 240px; }
.foot { margin-top: 3px; flex: 1; background: #99b4d1; display: flex; align-items: center; padding: 0 37px 0 9px; font-size: 19px; color: #0a0a0a; }
.foot b { transform: scaleX(1.055); transform-origin: 0 50%; padding-top: 2px; }
.foot svg { margin-left: auto; }
.day { margin-left: 25px; width: 105px; white-space: nowrap; }
```
